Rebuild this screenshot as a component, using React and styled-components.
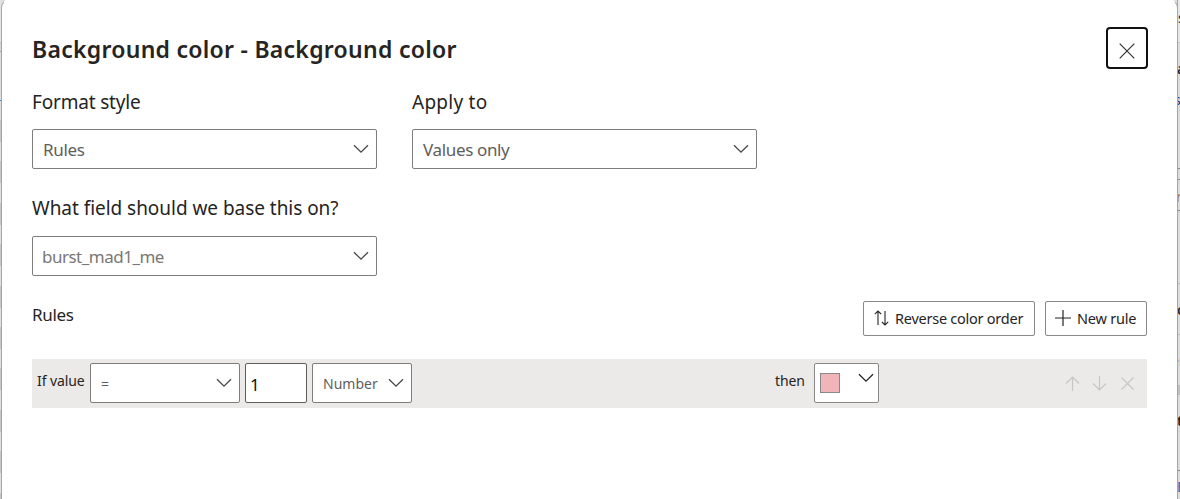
import React from "react";
import styled, { createGlobalStyle } from "styled-components";

const Global = createGlobalStyle`
  * { box-sizing: border-box; }
  body {
    margin: 0;
    overflow: hidden;
    background: #dedede;
    color: #252423;
    font-family: "Noto Sans", "Open Sans", sans-serif;
  }
`;

const Page = styled.div`
  display: flex;
  width: 1180px;
  height: 499px;
  overflow: hidden;
  background: #dcdcdc;
`;

const LeftEdge = styled.div`
  flex: none;
  width: 1px;
  padding-top: 42px;
  background: #e6e6e6;
`;
const LeftHead = styled.div`
  height: 78px;
  border-top: 1px solid #c4c4c4;
  background: linear-gradient(#d6d6d6 0 8px, #a8a8a8 8px 9px, #dedede 9px 57px, #2b88d8 57px 58px, #dedede 58px);
`;
const LeftRows = styled.div`
  height: 379px;
  background: repeating-linear-gradient(#c6c6c6 0 22px, #e0e0e0 22px 41.4px);
`;

const RightEdge = styled.div`
  flex: none;
  width: 3px;
  margin-left: -1px;
  overflow: hidden;
  border-left: 1px solid #a6a6a6;
`;
const EdgeCell = styled.div`
  display: flex;
  justify-content: flex-start;
  height: ${(p) => p.$h}px;
  padding-top: ${(p) => p.$top || 0}px;
  border-bottom: 1px solid ${(p) => p.$line || "transparent"};
  background: ${(p) => p.$bg || "#dcdcdc"};
  color: ${(p) => p.$color || "#252423"};
  font-size: 14px;
  font-weight: ${(p) => (p.$bold ? 600 : 400)};
  line-height: 18px;
  overflow: hidden;
  text-indent: ${(p) => p.$indent || 0}px;
`;

const Dialog = styled.main`
  flex: none;
  width: 1177px;
  height: 520px;
  padding: 27px 30px 0 30px;
  background: #fff;
  border: 1px solid #a6a6a6;
  border-top-color: #fff;
  border-radius: 9px;
  margin-top: -1px;
`;

const Header = styled.header`
  display: flex;
  justify-content: space-between;
  height: 42px;
  margin-right: -1px;
`;
const Title = styled.h1`
  margin: 6px 0 0;
  font-size: 23px;
  font-weight: 600;
  line-height: 32px;
  letter-spacing: ${(p) => p.$track}px;
  white-space: nowrap;
`;
const CloseButton = styled.button`
  display: grid;
  place-items: center;
  width: 42px;
  height: 42px;
  padding: 5px 0 0;
  border: 2px solid #111;
  border-radius: 4px;
  background: #fff;
  color: #333;
`;

const Fields = styled.div`
  display: flex;
  gap: 35px;
  margin-top: ${(p) => p.$mt}px;
`;
const Field = styled.div`
  width: 345px;
`;
const Label = styled.label`
  display: block;
  height: 28px;
  margin-bottom: ${(p) => p.$gap}px;
  font-size: 19px;
  line-height: 28px;
  letter-spacing: ${(p) => p.$track || 0}px;
  white-space: nowrap;
`;
const Select = styled.div`
  display: flex;
  align-items: center;
  justify-content: space-between;
  width: ${(p) => p.$w || 345}px;
  height: 40px;
  padding: 0 7px 0 ${(p) => p.$pl || 10}px;
  border: 1px solid #7f7d7b;
  border-radius: 2px;
  background: #fff;
  color: ${(p) => p.$color || "#605e5c"};
  font-size: ${(p) => p.$size || 17}px;
  letter-spacing: ${(p) => p.$track || 0}px;
  line-height: 24px;
  white-space: nowrap;
`;
const Value = styled.span`
  padding-top: ${(p) => p.$drop || 0}px;
`;

const Toolbar = styled.div`
  display: flex;
  align-items: flex-start;
  gap: 10px;
  height: 35px;
  margin-top: 25px;
`;
const SectionName = styled.h2`
  margin: 0 auto 0 0;
  padding-top: 1px;
  font-size: 17px;
  font-weight: 400;
  line-height: 26px;
  letter-spacing: ${(p) => p.$track || 0}px;
`;
const Button = styled.button`
  display: flex;
  align-items: center;
  gap: ${(p) => p.$gap}px;
  width: ${(p) => p.$w}px;
  height: 35px;
  padding: 0 0 2px ${(p) => p.$pl}px;
  border: 1px solid #8a8886;
  border-radius: 2px;
  background: #fff;
  color: #252423;
  font: 14.5px/20px "Noto Sans", "Open Sans", sans-serif;
  letter-spacing: ${(p) => p.$track || 0}px;
  white-space: nowrap;
`;

const RuleRow = styled.div`
  display: flex;
  gap: 5px;
  height: 49px;
  margin-top: 23px;
  padding: 4px 0 0 5px;
  background: #ebeae9;
`;
const RuleText = styled.span`
  width: ${(p) => p.$w}px;
  margin-left: ${(p) => p.$ml || 0};
  padding-top: 8px;
  font-size: 14px;
  line-height: 20px;
  letter-spacing: ${(p) => p.$track || 0}px;
  white-space: nowrap;
`;
const NumberInput = styled.input`
  width: 62px;
  height: 40px;
  padding: 3px 4px 0;
  border: 1px solid #605e5c;
  border-radius: 2px;
  background: #fff;
  color: #111;
  font: 17px "Noto Sans", "Open Sans", sans-serif;
`;
const ColorPicker = styled.div`
  display: flex;
  justify-content: space-between;
  width: 65px;
  height: 40px;
  margin-left: 4px;
  padding: 9px 4px 0 5px;
  border: 1px solid #8a8886;
  border-radius: 2px;
  background: #fff;
`;
const Swatch = styled.span`
  width: 20px;
  height: 20px;
  border: 1px solid #8a8886;
  background: #f0b4b9;
`;
const Actions = styled.div`
  display: flex;
  gap: 12.5px;
  margin-left: 180.5px;
  padding-top: 13px;
  color: #c8c6c4;
`;

const Icon = ({ w, h, d, sw = 1.2 }) => (
  <svg width={w} height={h} viewBox={`0 0 ${w} ${h}`} fill="none" stroke="currentColor" strokeWidth={sw}>
    <path d={d} />
  </svg>
);
const Chevron = ({ color = "#484644" }) => (
  <svg width="16" height="10" viewBox="0 0 16 10" fill="none" stroke={color} strokeWidth="1.3">
    <path d="M1 1.2 8 8.2 15 1.2" />
  </svg>
);

export default function App() {
  return (
    <Page>
      <Global />
      <LeftEdge>
        <LeftHead />
        <LeftRows />
      </LeftEdge>
      <Dialog>
        <Header>
          <Title $track={0.27}>Background color - Background color</Title>
          <CloseButton aria-label="Close">
            <Icon w={16} h={16} d="M.7.7 15.3 15.3M15.3.7.7 15.3" />
          </CloseButton>
        </Header>
        <Fields $mt={19}>
          <Field>
            <Label $gap={13} $track={-0.18}>Format style</Label>
            <Select $track={-0.35}><Value $drop={1}>Rules</Value><Chevron /></Select>
          </Field>
          <Field>
            <Label $gap={13} $track={0.25}>Apply to</Label>
            <Select $track={-0.35}><Value $drop={1}>Values only</Value><Chevron /></Select>
          </Field>
        </Fields>
        <Fields $mt={25}>
          <Field>
            <Label $gap={14} $track={-0.04}>What field should we base this on?</Label>
            <Select $pl={9} $color="#797775" $track={-0.5}><Value $drop={1}>burst_mad1_me</Value><Chevron /></Select>
          </Field>
        </Fields>
        <Toolbar>
          <SectionName $track={-0.3}>Rules</SectionName>
          <Button $w={172} $pl={10} $gap={6} $track={-0.25}>
            <Icon w={15} h={16} d="M4 15V1M.8 4.2 4 1l3.2 3.2M11 1v14M7.8 11.8 11 15l3.2-3.2" sw={1.1} />
            Reverse color order
          </Button>
          <Button $w={102} $pl={9} $gap={6} $track={-0.2}>
            <Icon w={16} h={16} d="M8 0v16M0 8h16" />
            New rule
          </Button>
        </Toolbar>
        <RuleRow>
          <RuleText $w={48} $track={-0.1}>If value</RuleText>
          <Select $w={150} $size={14}><Value $drop={2}>=</Value><Chevron /></Select>
          <NumberInput defaultValue="1" />
          <Select $w={100} $size={14}><Value $drop={2}>Number</Value><Chevron /></Select>
          <RuleText $w={30} $ml="358px" $track={-0.1}>then</RuleText>
          <ColorPicker><Swatch /><Chevron color="#252423" /></ColorPicker>
          <Actions>
            <Icon w={15} h={15} d="M7.5 15V1M1 7.5 7.5 1 14 7.5" />
            <Icon w={15} h={15} d="M7.5 0v14M1 7.5 7.5 14 14 7.5" />
            <Icon w={15} h={15} d="M1.5 1.5 13.5 13.5M13.5 1.5 1.5 13.5" />
          </Actions>
        </RuleRow>
      </Dialog>
      <RightEdge>
        <EdgeCell $h={43} $top={9} $bg="#e8e8e8" $line="#c8c8c8">s</EdgeCell>
        <EdgeCell $h={46} $top={17} $indent={-1} $bold>a</EdgeCell>
        <EdgeCell $h={80} $top={2} $indent={-4} $color="#1b3a78" $line="#858585">s</EdgeCell>
        <EdgeCell $h={11} $line="#858585" />
        <EdgeCell $h={31} $top={8} $indent={-2} $color="#a56a2a" $line="#858585">r</EdgeCell>
        <EdgeCell $h={73} $line="#bdbdbd" />
        <EdgeCell $h={51} $top={17} $indent={-1} $line="#bdbdbd" $bold>c</EdgeCell>
        <EdgeCell $h={50} $top={17} $indent={-7} $color="#8a4a20">er</EdgeCell>
        <EdgeCell $h={10} $bg="#bfbfbf" />
        <EdgeCell $h={76} $top={17} $indent={-1} $line="#858585" $bold>t</EdgeCell>
        <EdgeCell $h={30} $top={7} $indent={-1} $color="#2b6cb0">E</EdgeCell>
      </RightEdge>
    </Page>
  );
}
